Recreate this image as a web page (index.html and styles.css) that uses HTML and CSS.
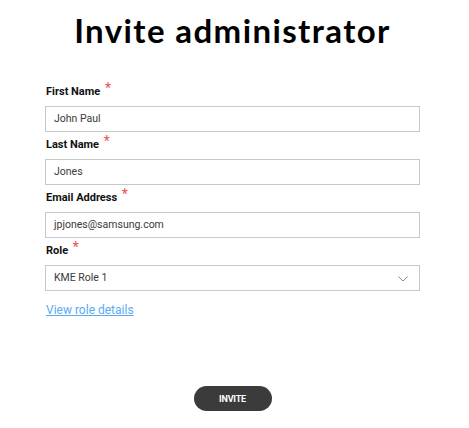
FILE: index.html
```html
<!DOCTYPE html>
<html>
<head>
<meta charset="utf-8">
<link rel="stylesheet" href="styles.css">
</head>
<body>
<div class="page">
  <h1 class="title">Invite administrator</h1>
  <form class="form">
    <div class="field">
      <label class="label">First Name <span class="req">*</span></label>
      <div class="input">John Paul</div>
    </div>
    <div class="field">
      <label class="label">Last Name <span class="req">*</span></label>
      <div class="input">Jones</div>
    </div>
    <div class="field">
      <label class="label">Email Address <span class="req">*</span></label>
      <div class="input">jpjones@samsung.com</div>
    </div>
    <div class="field">
      <label class="label">Role <span class="req">*</span></label>
      <div class="input select">
        <span>KME Role 1</span>
        <svg class="chev" width="10" height="6" viewBox="0 0 10 6"><path d="M0.5 0.5 L5 5 L9.5 0.5" fill="none" stroke="#8a8a8a" stroke-width="1"/></svg>
      </div>
    </div>
    <a class="link" href="#">View role details</a>
    <div class="actions">
      <button class="btn" type="button">INVITE</button>
    </div>
  </form>
</div>
</body>
</html>
```
FILE: styles.css
```css
html, body { margin: 0; padding: 0; background: #fff; }
body { font-family: Roboto, "Liberation Sans", sans-serif; color: #222; }
.page { width: 375px; margin-left: 45px; }
.title {
  margin: 0;
  padding-top: 6px;
  height: 51px;
  text-align: center;
  font-family: Lato, "Open Sans", sans-serif;
  font-weight: 700;
  font-size: 33px;
  letter-spacing: 1.4px;
  line-height: 48px;
  color: #000;
}
.form { display: flex; flex-direction: column; margin-top: 27px; }
.field { display: flex; flex-direction: column; height: 53px; }
.label {
  font-size: 11px;
  font-weight: 700;
  color: #111;
  height: 14px;
  line-height: 14px;
  margin-top: -3px;
  padding-bottom: 11px;
  padding-left: 1px;
}
.req { color: #f04e4e; font-weight: 400; font-size: 14px; vertical-align: 2px; margin-left: 2px; }
.input {
  box-sizing: border-box;
  height: 26px;
  border: 1px solid #c8c8c8;
  padding: 0 8px;
  font-size: 10.5px;
  line-height: 24px;
  color: #3a3a3a;
}
.select { display: flex; justify-content: space-between; align-items: center; padding-right: 11px; }
.chev { margin-top: 2px; }
.link {
  margin-top: 7px;
  font-size: 12px;
  color: #5aa9f5;
  text-decoration: underline;
  align-self: flex-start;
  padding-left: 1px;
}
.actions { display: flex; justify-content: center; margin-top: 69px; }
.btn {
  width: 78px;
  height: 25px;
  border: none;
  border-radius: 13px;
  background: #3b3b3b;
  color: #fff;
  font-family: Roboto, "Liberation Sans", sans-serif;
  font-weight: 700;
  font-size: 9px;
  letter-spacing: -0.2px;
  padding: 0;
}
```
